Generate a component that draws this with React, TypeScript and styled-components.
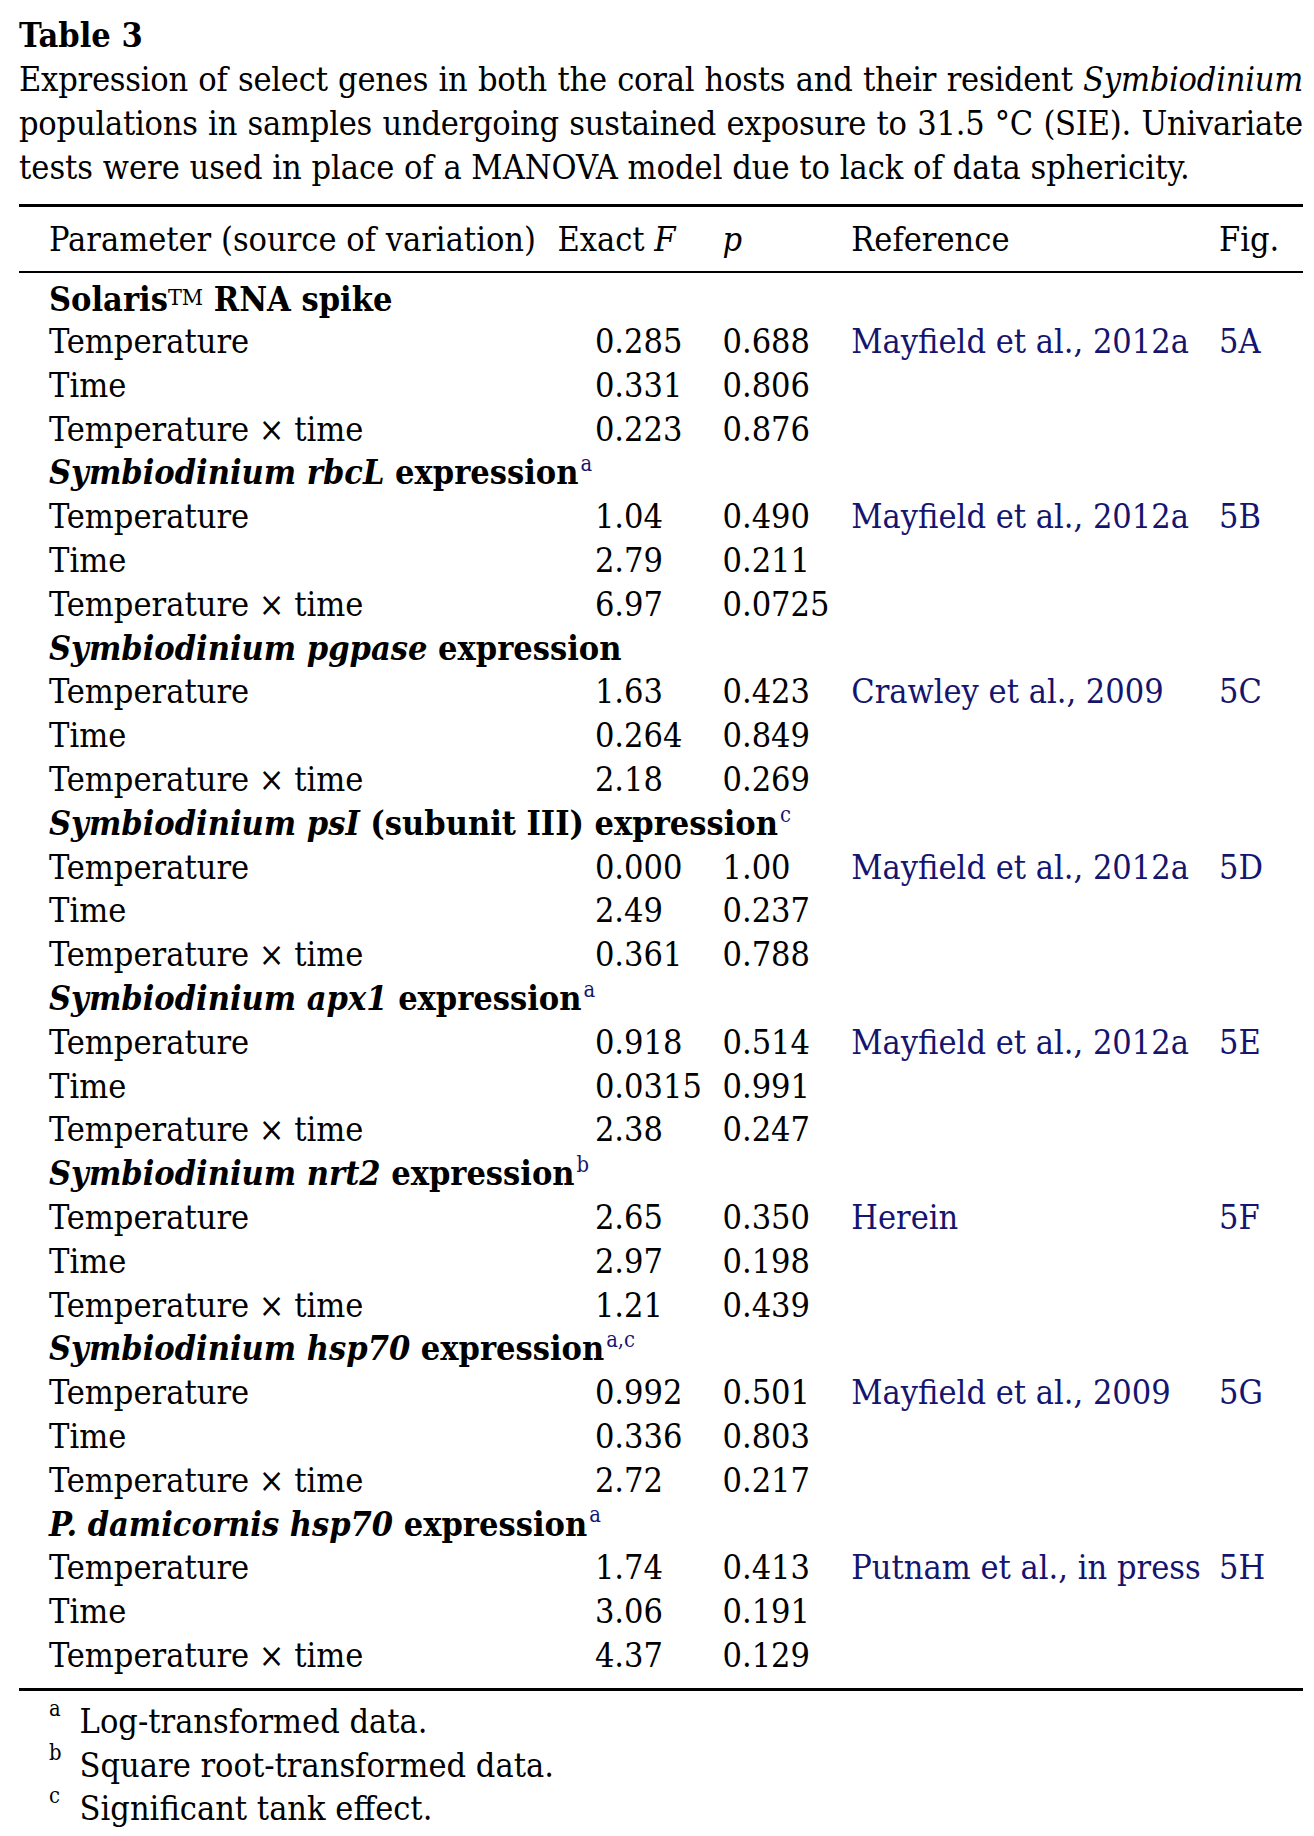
import React from "react";
import styled, { createGlobalStyle } from "styled-components";

const Global = createGlobalStyle`
  html, body { margin: 0; padding: 0; background: #fff; }
  body { font-family: "DejaVu Serif Condensed", "DejaVu Serif", "Liberation Serif", serif; font-stretch: condensed; color: #000; }
`;

const Page = styled.div`
  width: 1284px;
  padding: 13px 11px 0 19px;
  font-size: 34px;
  line-height: 44px;
`;

const Title = styled.div`
  font-weight: bold;
`;

const CaptionLine = styled.div<{ $last?: boolean }>`
  text-align: justify;
  text-align-last: ${(p) => (p.$last ? "left" : "justify")};
  letter-spacing: ${(p) => (p.$last ? "0" : "-0.22px")};
  white-space: nowrap;
`;

const Table = styled.div`
  margin-top: 15px;
  border-top: 3px solid #000;
  border-bottom: 3px solid #000;
  display: grid;
  grid-template-columns: 538.4px 165.1px 128.8px 367.7px 84px;
  padding-bottom: 10px;
`;

const HeadCell = styled.div<{ $pad?: number }>`
  height: 63.5px;
  display: flex;
  align-items: center;
  white-space: nowrap;
  padding-left: ${(p) => p.$pad ?? 0}px;
  border-bottom: 2.5px solid #000;
  margin-bottom: 3.7px;
`;

const Cell = styled.div<{ $pad?: number; $blue?: boolean }>`
  height: 43.8px;
  line-height: 43.8px;
  white-space: nowrap;
  padding-left: ${(p) => p.$pad ?? 0}px;
  color: ${(p) => (p.$blue ? "#15156f" : "#000")};
`;

const Section = styled.div`
  grid-column: 1 / -1;
  height: 43.8px;
  line-height: 43.8px;
  padding-left: 30px;
  font-weight: bold;
  white-space: nowrap;
`;

const Sup = styled.sup<{ $blue?: boolean }>`
  font-size: 0.64em;
  font-weight: normal;
  line-height: 0;
  vertical-align: 0.6em;
  margin-left: 2px;
  color: ${(p) => (p.$blue ? "#15156f" : "#000")};
`;

const Tm = styled.span`
  font-weight: normal;
  font-size: 0.68em;
  vertical-align: 0.25em;
`;

const Notes = styled.div`
  padding: 9.5px 0 0 30px;
`;

const Note = styled.div`
  display: flex;
  height: 43.5px;
  line-height: 43.5px;
`;

const NoteMark = styled.span`
  width: 30.6px;
  font-size: 0.64em;
  line-height: 0;
  position: relative;
  top: 9px;
`;

type Row = { label: React.ReactNode; f: string; p: string; ref?: string; fig?: string };
type Sec = { title: React.ReactNode; rows: Row[] };

const TxT = "Temperature \u00d7 time";

const sections: Sec[] = [
  {
    title: (<>Solaris<Tm>TM</Tm> RNA spike</>),
    rows: [
      { label: "Temperature", f: "0.285", p: "0.688", ref: "Mayfield et al., 2012a", fig: "5A" },
      { label: "Time", f: "0.331", p: "0.806" },
      { label: TxT, f: "0.223", p: "0.876" },
    ],
  },
  {
    title: (<><i>Symbiodinium rbcL</i> expression<Sup $blue>a</Sup></>),
    rows: [
      { label: "Temperature", f: "1.04", p: "0.490", ref: "Mayfield et al., 2012a", fig: "5B" },
      { label: "Time", f: "2.79", p: "0.211" },
      { label: TxT, f: "6.97", p: "0.0725" },
    ],
  },
  {
    title: (<><i>Symbiodinium pgpase</i> expression</>),
    rows: [
      { label: "Temperature", f: "1.63", p: "0.423", ref: "Crawley et al., 2009", fig: "5C" },
      { label: "Time", f: "0.264", p: "0.849" },
      { label: TxT, f: "2.18", p: "0.269" },
    ],
  },
  {
    title: (<><i>Symbiodinium psI</i> (subunit III) expression<Sup $blue>c</Sup></>),
    rows: [
      { label: "Temperature", f: "0.000", p: "1.00", ref: "Mayfield et al., 2012a", fig: "5D" },
      { label: "Time", f: "2.49", p: "0.237" },
      { label: TxT, f: "0.361", p: "0.788" },
    ],
  },
  {
    title: (<><i>Symbiodinium apx1</i> expression<Sup $blue>a</Sup></>),
    rows: [
      { label: "Temperature", f: "0.918", p: "0.514", ref: "Mayfield et al., 2012a", fig: "5E" },
      { label: "Time", f: "0.0315", p: "0.991" },
      { label: TxT, f: "2.38", p: "0.247" },
    ],
  },
  {
    title: (<><i>Symbiodinium nrt2</i> expression<Sup $blue>b</Sup></>),
    rows: [
      { label: "Temperature", f: "2.65", p: "0.350", ref: "Herein", fig: "5F" },
      { label: "Time", f: "2.97", p: "0.198" },
      { label: TxT, f: "1.21", p: "0.439" },
    ],
  },
  {
    title: (<><i>Symbiodinium hsp70</i> expression<Sup $blue>a,c</Sup></>),
    rows: [
      { label: "Temperature", f: "0.992", p: "0.501", ref: "Mayfield et al., 2009", fig: "5G" },
      { label: "Time", f: "0.336", p: "0.803" },
      { label: TxT, f: "2.72", p: "0.217" },
    ],
  },
  {
    title: (<><i>P. damicornis hsp70</i> expression<Sup $blue>a</Sup></>),
    rows: [
      { label: "Temperature", f: "1.74", p: "0.413", ref: "Putnam et al., in press", fig: "5H" },
      { label: "Time", f: "3.06", p: "0.191" },
      { label: TxT, f: "4.37", p: "0.129" },
    ],
  },
];

export default function App() {
  return (
    <>
      <Global />
      <Page>
        <Title>Table 3</Title>
        <CaptionLine>
          Expression of select genes in both the coral hosts and their resident <i>Symbiodinium</i>
        </CaptionLine>
        <CaptionLine>
          populations in samples undergoing sustained exposure to 31.5 °C (SIE). Univariate
        </CaptionLine>
        <CaptionLine $last>tests were used in place of a MANOVA model due to lack of data sphericity.</CaptionLine>
        <Table>
          <HeadCell $pad={30}>Parameter (source of variation)</HeadCell>
          <HeadCell>
            Exact&nbsp;<i>F</i>
          </HeadCell>
          <HeadCell>
            <i>p</i>
          </HeadCell>
          <HeadCell>Reference</HeadCell>
          <HeadCell>Fig.</HeadCell>
          {sections.map((s, i) => (
            <React.Fragment key={i}>
              <Section>{s.title}</Section>
              {s.rows.map((r, j) => (
                <React.Fragment key={j}>
                  <Cell $pad={30}>{r.label}</Cell>
                  <Cell $pad={37.5}>{r.f}</Cell>
                  <Cell>{r.p}</Cell>
                  <Cell $blue>{r.ref ?? ""}</Cell>
                  <Cell $blue>{r.fig ?? ""}</Cell>
                </React.Fragment>
              ))}
            </React.Fragment>
          ))}
        </Table>
        <Notes>
          <Note>
            <NoteMark>a</NoteMark>Log-transformed data.
          </Note>
          <Note>
            <NoteMark>b</NoteMark>Square root-transformed data.
          </Note>
          <Note>
            <NoteMark>c</NoteMark>Significant tank effect.
          </Note>
        </Notes>
      </Page>
    </>
  );
}
